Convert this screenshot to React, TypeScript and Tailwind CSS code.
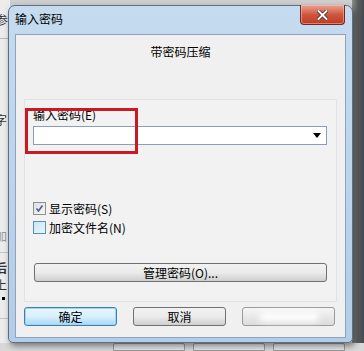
import React from "react";

const font = { fontFamily: '"Noto Sans CJK SC", "Noto Sans", sans-serif' };

function WinButton({ label, primary, blurred }: { label?: string; primary?: boolean; blurred?: boolean }) {
  return (
    <div
      className={`w-[93px] h-[19px] rounded-[3px] border flex items-center justify-center text-[12px] leading-none text-black ${
        primary
          ? "border-[#3c7fb1] bg-gradient-to-b from-[#eaf6fd] via-[#d9f0fc] to-[#a7d9f5] shadow-[inset_0_0_0_1px_#9cd8f3]"
          : blurred
          ? "border-[#9a9a9a] bg-gradient-to-b from-[#f6f6f6] to-[#dcdcdc]"
          : "border-[#707070] bg-gradient-to-b from-[#f2f2f2] via-[#ebebeb] to-[#cfcfcf]"
      }`}
    >
      {blurred ? <div className="w-[60px] h-[10px] rounded-full bg-white/90 blur-[3px]" /> : label}
    </div>
  );
}

function Checkbox({ checked, label }: { checked?: boolean; label: string }) {
  return (
    <div className="flex items-center gap-[3px] h-[13px]">
      <div
        className={`w-[13px] h-[13px] border flex items-center justify-center ${
          checked ? "border-[#8f8f8f] bg-gradient-to-br from-[#e0e0e0] to-[#f6f6f6]" : "border-[#5a8fb6] bg-gradient-to-br from-[#c9e6f6] to-[#e8f5fc]"
        }`}
      >
        {checked && (
          <svg width="9" height="9" viewBox="0 0 9 9">
            <path d="M1.5 4.5 L3.5 7 L7.5 1.5" stroke="#4a5f8a" strokeWidth="1.6" fill="none" />
          </svg>
        )}
      </div>
      <span className="text-[12px] leading-none text-black">{label}</span>
    </div>
  );
}

export default function App() {
  return (
    <div className="relative w-[364px] h-[351px] overflow-hidden bg-[#cfcfcf]" style={font}>
      {/* background app behind the dialog */}
      <div className="absolute left-0 top-0 w-[10px] h-[351px] bg-[#ececec] text-[12px] leading-none text-[#333] overflow-hidden">
        <div className="absolute top-[14px] left-[-4px]">参</div>
        <div className="absolute top-[38px] left-0 w-[10px] border-t border-[#b8b8b8]" />
        <div className="absolute top-[114px] left-[-5px]">字</div>
        <div className="absolute top-[132px] left-[-5px] text-[#999]">:</div>
        <div className="absolute top-[230px] left-[-5px] text-[#999]">加</div>
        <div className="absolute top-[252px] left-0 w-[10px] border-t border-[#c4c4c4]" />
        <div className="absolute top-[262px] left-[-5px] font-bold">后</div>
        <div className="absolute top-[279px] left-[-5px]">上</div>
        <div className="absolute top-[297px] left-[2px] w-[3px] h-[3px] bg-black" />
        <div className="absolute top-[318px] left-0 w-[10px] border-t border-[#c4c4c4]" />
      </div>
      <div className="absolute right-0 top-0 w-[12px] h-[351px] bg-gradient-to-r from-[#8d8d8d] via-[#5b5b5b] to-[#454a52]" />
      <div className="absolute left-0 bottom-0 w-[364px] h-[8px] bg-[#d8d8d8] flex gap-[8px] pl-[113px]">
        <div className="w-[72px] h-[8px] border border-[#9a9a9a] rounded-t-[2px] bg-[#e6e6e6]" />
        <div className="w-[72px] h-[8px] border border-[#9a9a9a] rounded-t-[2px] bg-[#e6e6e6]" />
        <div className="w-[72px] h-[8px] border border-[#9a9a9a] rounded-t-[2px] bg-[#e6e6e6]" />
      </div>

      {/* dialog window */}
      <div className="absolute left-[8px] top-[5px] w-[345px] h-[338px] rounded-t-[7px] rounded-b-[5px] border border-[#5c6f87] bg-gradient-to-b from-[#c5dbef] via-[#bcd4ec] to-[#b3cde8] shadow-[2px_3px_6px_rgba(0,0,0,0.45)] flex flex-col">
        <div className="h-[28px] flex items-start justify-between pl-[6px] pr-[7px]">
          <span className="mt-[7px] text-[12px] leading-none text-black">输入密码</span>
          <div className="w-[45px] h-[20px] -mt-px rounded-b-[4px] border border-[#6b2a24] border-t-0 bg-gradient-to-b from-[#e8a493] via-[#d0563f] to-[#c23a21] flex items-center justify-center shadow-[inset_0_0_0_1px_rgba(255,200,190,0.5)]">
            <svg width="11" height="10" viewBox="0 0 11 10">
              <path d="M1.5 1 L9.5 9 M9.5 1 L1.5 9" stroke="#3a1a14" strokeWidth="3.4" strokeLinecap="square" />
              <path d="M1.5 1 L9.5 9 M9.5 1 L1.5 9" stroke="#ffffff" strokeWidth="2" strokeLinecap="square" />
            </svg>
          </div>
        </div>

        <div className="ml-[6px] w-[331px] h-[304px] border border-[#8ea3bb] bg-[#f0f0f0] flex flex-col">
          <div className="h-[38px] pt-[11px] text-center text-[12px] leading-none text-black">带密码压缩</div>

          <div className="ml-[8px] mt-[26px] w-[313px] h-[203px] border border-[#e2e2e2] bg-[#f2f2f2] relative flex flex-col">
            <div className="ml-[8px] mt-[9px] text-[12px] leading-none text-black">输入密码(E)</div>
            <div className="ml-[8px] mt-[5px] w-[294px] h-[19px] border border-[#8c9eb3] bg-white flex items-center justify-end pr-[5px]">
              <svg width="8" height="5" viewBox="0 0 8 5">
                <path d="M0 0 H8 L4 5 Z" fill="#000" />
              </svg>
            </div>

            <div className="ml-[8px] mt-[57px] flex flex-col gap-[6px]">
              <Checkbox checked label="显示密码(S)" />
              <Checkbox label="加密文件名(N)" />
            </div>

            <div className="ml-[9px] mt-[29px] w-[293px] h-[19px] rounded-[3px] border border-[#707070] bg-gradient-to-b from-[#f2f2f2] via-[#ebebeb] to-[#cfcfcf] flex items-center justify-center text-[12px] leading-none text-black">
              管理密码(O)...
            </div>

            {/* red annotation box */}
            <div className="absolute left-0 top-[8px] w-[113px] h-[46px] border-[3px] border-[#c81a22]" />
          </div>

          <div className="ml-[8px] mt-[5px] flex gap-[16px]">
            <WinButton label="确定" primary />
            <WinButton label="取消" />
            <WinButton blurred />
          </div>
        </div>
      </div>
    </div>
  );
}
